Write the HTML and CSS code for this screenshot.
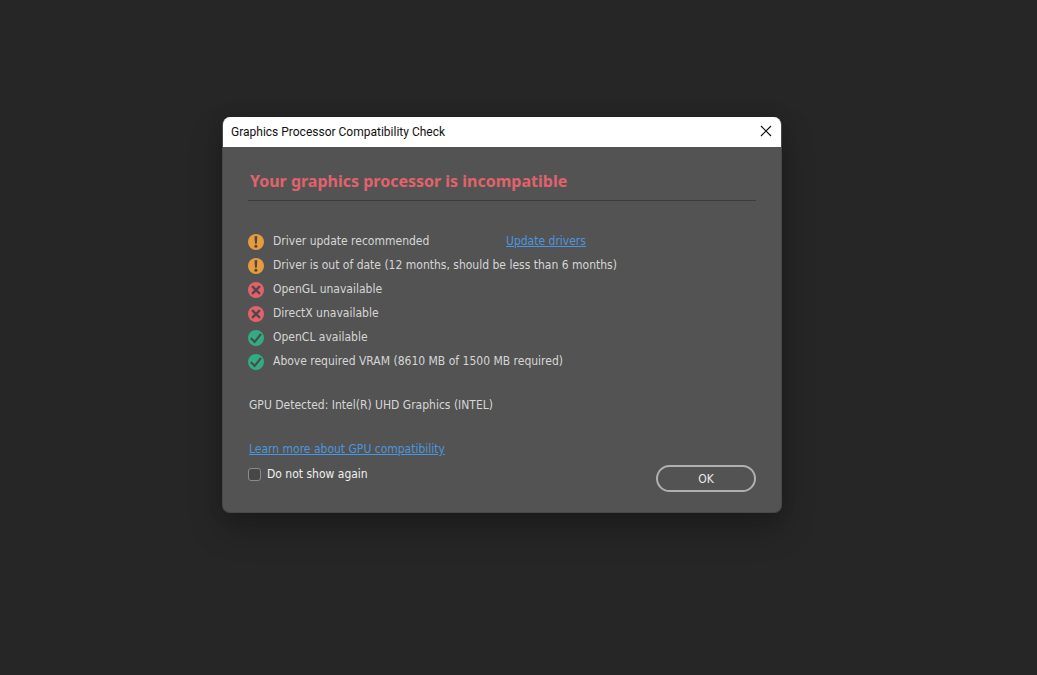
FILE: index.html
```html
<!DOCTYPE html>
<html lang="en">
<head>
<meta charset="utf-8">
<meta name="viewport" content="width=device-width, initial-scale=1">
<title>Graphics Processor Compatibility Check</title>
<link rel="stylesheet" href="styles.css">
</head>
<body>
<svg class="symbols" aria-hidden="true">
  <symbol id="warn" viewBox="0 0 16 16">
    <circle cx="8" cy="8" r="8" fill="#e69b3e"/>
    <path d="M6.5 2.2h2.8L8.8 9.8H7z" fill="#4c463d"/>
    <circle cx="7.9" cy="12.2" r="1.5" fill="#4c463d"/>
  </symbol>
  <symbol id="fail" viewBox="0 0 16 16">
    <circle cx="8" cy="8" r="8" fill="#e0636c"/>
    <path d="M4.1 4.1l7.8 7.8M11.9 4.1l-7.8 7.8" stroke="#524649" stroke-width="2.4"/>
  </symbol>
  <symbol id="pass" viewBox="0 0 16 16">
    <circle cx="8" cy="8" r="8" fill="#33ab84"/>
    <path d="M2.8 8l3.8 4 6.4-8" fill="none" stroke="#43504b" stroke-width="2.1"/>
  </symbol>
</svg>
<main class="desktop">
  <section class="dialog" role="dialog" aria-labelledby="dialog-title">
    <header class="titlebar">
      <h1 class="title" id="dialog-title">Graphics Processor Compatibility Check</h1>
      <button class="close" type="button" aria-label="Close">
        <svg class="close-icon" viewBox="0 0 12 12" aria-hidden="true"><path d="M1 1l10 10M11 1L1 11" stroke="#111" stroke-width="1.2"/></svg>
      </button>
    </header>
    <div class="content">
      <h2 class="heading">Your graphics processor is incompatible</h2>
      <ul class="checks">
        <li class="check"><svg class="icon"><use href="#warn"/></svg><span class="label">Driver update recommended</span><a class="link" href="#drivers">Update drivers</a></li>
        <li class="check"><svg class="icon"><use href="#warn"/></svg><span>Driver is out of date (12 months, should be less than 6 months)</span></li>
        <li class="check"><svg class="icon"><use href="#fail"/></svg><span>OpenGL unavailable</span></li>
        <li class="check"><svg class="icon"><use href="#fail"/></svg><span>DirectX unavailable</span></li>
        <li class="check"><svg class="icon"><use href="#pass"/></svg><span>OpenCL available</span></li>
        <li class="check"><svg class="icon"><use href="#pass"/></svg><span>Above required VRAM (8610 MB of 1500 MB required)</span></li>
      </ul>
      <p class="detected">GPU Detected: Intel(R) UHD Graphics (INTEL)</p>
      <footer class="footer">
        <div class="options">
          <a class="link learn" href="#learn">Learn more about GPU compatibility</a>
          <label class="again"><input class="box" type="checkbox">Do not show again</label>
        </div>
        <button class="ok" type="button">OK</button>
      </footer>
    </div>
  </section>
</main>
</body>
</html>
```
FILE: styles.css
```css
* { box-sizing: border-box; }

body {
  margin: 0;
  min-height: 100vh;
  background: #262626;
  color: #d6d6d6;
  font: 12px/16px "DejaVu Sans Condensed", "Noto Sans", sans-serif;
}

h1, h2, p, ul { margin: 0; padding: 0; }

.symbols { display: none; }

.desktop { padding: 117px 255px 32px 222px; }

.dialog {
  border: 1px solid #484848;
  border-top: 0;
  border-radius: 8px;
  background: #535353;
  box-shadow: 0 16px 32px rgba(0, 0, 0, 0.25), 0 0 16px rgba(0, 0, 0, 0.12);
  overflow: hidden;
}

.titlebar {
  display: flex;
  align-items: center;
  justify-content: space-between;
  height: 30px;
  padding: 0 8px;
  background: #fff;
  color: #111;
}

.title {
  font: 400 12px/16px Roboto, "Noto Sans", sans-serif;
}

.close {
  display: flex;
  padding: 0 1px 2px;
  border: 0;
  background: none;
}

.close-icon { width: 12px; height: 12px; }

.content { padding: 22px 25px 20px; }

.heading {
  padding: 0 2px 7px;
  border-bottom: 1px solid #3d3d3d;
  color: #e0636c;
  font: 700 16px/24px "Noto Sans", "Open Sans", sans-serif;
}

.checks {
  margin-top: 28px;
  list-style: none;
}

.check {
  display: flex;
  align-items: center;
  gap: 9px;
  height: 24px;
}

.icon { width: 16px; height: 16px; margin-top: 2px; }

.label { width: 224px; }

.link { color: #4b96de; text-decoration: underline; }

.detected { margin: 24px 1px 0; }

.footer {
  display: flex;
  align-items: flex-end;
  justify-content: space-between;
  margin-top: 28px;
}

.options {
  display: flex;
  flex-direction: column;
  align-items: flex-start;
  gap: 9px;
  padding-bottom: 10px;
}

.learn { margin-left: 1px; }

.again {
  display: flex;
  align-items: center;
  gap: 6px;
  color: #f0f0f0;
}

.box {
  appearance: none;
  width: 13px;
  height: 13px;
  margin: 0;
  border: 1px solid #8c8c8c;
  border-radius: 3px;
  background: #474747;
}

.box:checked { background: #4b93d8; }

.ok {
  width: 100px;
  height: 27px;
  padding: 0;
  border: 2px solid #b0b0b0;
  border-radius: 14px;
  background: none;
  color: #e8e8e8;
  font: inherit;
}
```
